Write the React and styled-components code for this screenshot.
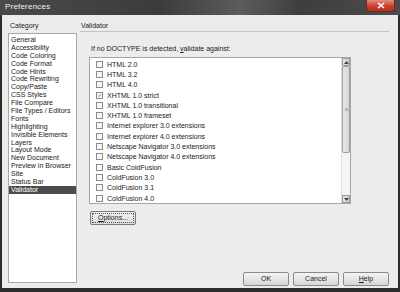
import React, { useState } from 'react';
import styled, { createGlobalStyle } from 'styled-components';

const categories = [
  'General', 'Accessibility', 'Code Coloring', 'Code Format', 'Code Hints',
  'Code Rewriting', 'Copy/Paste', 'CSS Styles', 'File Compare', 'File Types / Editors',
  'Fonts', 'Highlighting', 'Invisible Elements', 'Layers', 'Layout Mode',
  'New Document', 'Preview in Browser', 'Site', 'Status Bar', 'Validator'
];

const doctypes = [
  { name: 'HTML 2.0', on: false },
  { name: 'HTML 3.2', on: false },
  { name: 'HTML 4.0', on: false },
  { name: 'XHTML 1.0 strict', on: true },
  { name: 'XHTML 1.0 transitional', on: false },
  { name: 'XHTML 1.0 frameset', on: false },
  { name: 'Internet explorer 3.0 extensions', on: false },
  { name: 'Internet explorer 4.0 extensions', on: false },
  { name: 'Netscape Navigator 3.0 extensions', on: false },
  { name: 'Netscape Navigator 4.0 extensions', on: false },
  { name: 'Basic ColdFusion', on: false },
  { name: 'ColdFusion 3.0', on: false },
  { name: 'ColdFusion 3.1', on: false },
  { name: 'ColdFusion 4.0', on: false }
];

const GlobalStyle = createGlobalStyle`
  body {
    margin: 0;
    font-family: "Liberation Sans", "DejaVu Sans", sans-serif;
    background: #2e2e2e;
  }
`;

export default function App() {
  const [selected, setSelected] = useState('Validator');
  const [checks, setChecks] = useState(doctypes.map(d => d.on));

  const toggle = (i) => {
    const next = [...checks];
    next[i] = !next[i];
    setChecks(next);
  };

  return (
    <>
      <GlobalStyle />
      <Window>
        <TitleBar>
          <Title>Preferences</Title>
          <CloseBtn>
            <svg width="8" height="7" viewBox="0 0 8 7">
              <path d="M1 1 L7 6 M7 1 L1 6" stroke="#fff" strokeWidth="1.6" />
            </svg>
          </CloseBtn>
        </TitleBar>

        <Body>
          <LeftCol>
            <Label>Category</Label>
            <CatList>
              {categories.map(c => (
                <CatItem key={c} active={c === selected} onClick={() => setSelected(c)}>
                  {c}
                </CatItem>
              ))}
            </CatList>
          </LeftCol>

          <RightCol>
            <Header>Validator</Header>
            <Rule />
            <Prompt>
              If no DOCTYPE is detected, <u>v</u>alidate against:
            </Prompt>
            <ListBox>
              <Rows>
                {doctypes.map((d, i) => (
                  <Row key={d.name} onClick={() => toggle(i)}>
                    <Box>{checks[i] && (
                      <svg width="7" height="7" viewBox="0 0 7 7">
                        <path d="M1.5 3.5 L3 5 L5.8 1.8" stroke="#555" strokeWidth="0.9" fill="none" />
                      </svg>
                    )}</Box>
                    {d.name}
                  </Row>
                ))}
                <PartialBox />
              </Rows>
              <ScrollBar>
                <ArrowBtn>
                  <svg width="5" height="3" viewBox="0 0 5 3"><path d="M0 3 L2.5 0 L5 3Z" fill="#444" /></svg>
                </ArrowBtn>
                <Thumb><Grip /></Thumb>
                <Track />
                <ArrowBtn>
                  <svg width="5" height="3" viewBox="0 0 5 3"><path d="M0 0 L2.5 3 L5 0Z" fill="#444" /></svg>
                </ArrowBtn>
              </ScrollBar>
            </ListBox>
            <OptionsBtn><FocusRing><u>O</u>ptions...</FocusRing></OptionsBtn>

            <Footer>
              <Button>OK</Button>
              <Button>Cancel</Button>
              <Button><u>H</u>elp</Button>
            </Footer>
          </RightCol>
        </Body>
      </Window>
    </>
  );
}

const Window = styled.div`
  width: 400px;
  height: 292px;
  box-sizing: border-box;
  display: flex;
  flex-direction: column;
  background: #2e2e2e;
  padding: 0 2px 4px 2px;
`;

const TitleBar = styled.div`
  height: 15px;
  display: flex;
  align-items: flex-start;
  justify-content: space-between;
  background: linear-gradient(100deg, #4a4a4a 0%, #3c3c3c 40%, #5c5c5c 60%, #3e3e3e 75%, #4c4c4c 100%);
  margin: 0 -2px;
  padding: 0 5px 0 5px;
`;

const Title = styled.span`
  color: #f2f2f2;
  font-size: 8px;
  line-height: 14px;
  letter-spacing: 0.2px;
`;

const CloseBtn = styled.div`
  width: 27px;
  height: 11px;
  display: flex;
  align-items: center;
  justify-content: center;
  background: linear-gradient(#e58b7d, #c8402c 55%, #b5321f);
  border: 1px solid #6e2a22;
  border-top: none;
  border-radius: 0 0 3px 3px;
`;

const Body = styled.div`
  flex: 1;
  display: flex;
  background: #ececec;
  padding: 7px 9px 2px 6px;
  gap: 3px;
`;

const LeftCol = styled.div`
  width: 69px;
  display: flex;
  flex-direction: column;
`;

const Label = styled.div`
  font-size: 7px;
  color: #222;
  line-height: 8px;
  padding: 0 0 3px 2px;
`;

const CatList = styled.div`
  flex: 1;
  background: #fff;
  border: 1px solid #a8a8a8;
  padding-top: 2px;
  margin-bottom: 3px;
`;

const CatItem = styled.div`
  font-size: 7px;
  line-height: 7.9px;
  height: 7.9px;
  padding-left: 2px;
  white-space: nowrap;
  color: ${p => (p.active ? '#fff' : '#1a1a1a')};
  background: ${p => (p.active ? '#4b4b4b' : 'transparent')};
`;

const RightCol = styled.div`
  flex: 1;
  display: flex;
  flex-direction: column;
`;

const Header = styled.div`
  font-size: 7px;
  color: #222;
  line-height: 8px;
  padding-left: 1px;
`;

const Rule = styled.div`
  height: 1px;
  background: #c4c4c4;
  margin: 1px 0 0 0;
`;

const Prompt = styled.div`
  font-size: 7px;
  color: #1a1a1a;
  line-height: 8px;
  margin: 13px 0 4px 11px;
`;

const ListBox = styled.div`
  width: 262px;
  height: 147px;
  box-sizing: border-box;
  margin-left: 9px;
  background: #fff;
  border: 1px solid #a6a6a6;
  display: flex;
  overflow: hidden;
`;

const Rows = styled.div`
  flex: 1;
  padding: 1px 0 0 6px;
  overflow: hidden;
`;

const Row = styled.div`
  height: 10.3px;
  display: flex;
  align-items: center;
  gap: 4px;
  font-size: 7px;
  color: #1a1a1a;
  white-space: nowrap;
`;

const Box = styled.span`
  width: 7px;
  height: 7px;
  box-sizing: border-box;
  border: 1px solid #8a8a8a;
  background: #f7f7f7;
  display: flex;
  align-items: center;
  justify-content: center;
  flex-shrink: 0;
`;

const PartialBox = styled.div`
  width: 7px;
  height: 7px;
  box-sizing: border-box;
  border: 1px solid #8a8a8a;
  margin-top: 1.5px;
`;

const ScrollBar = styled.div`
  width: 8px;
  display: flex;
  flex-direction: column;
  background: #f0f0f0;
  border-left: 1px solid #e0e0e0;
`;

const ArrowBtn = styled.div`
  height: 8px;
  display: flex;
  align-items: center;
  justify-content: center;
  background: linear-gradient(90deg, #e6e6e6, #cfcfcf);
  border: 1px solid #9a9a9a;
  box-sizing: border-box;
`;

const Thumb = styled.div`
  height: 87px;
  box-sizing: border-box;
  border: 1px solid #a0a0a0;
  border-radius: 2px;
  background: linear-gradient(90deg, #e9e9e9, #d4d4d4);
  display: flex;
  align-items: center;
  justify-content: center;
`;

const Grip = styled.div`
  width: 3px;
  height: 3px;
  background: #b5b5b5;
`;

const Track = styled.div`
  flex: 1;
  background: #f4f4f4;
`;

const OptionsBtn = styled.div`
  width: 46px;
  height: 14px;
  box-sizing: border-box;
  margin: 7px 0 0 10px;
  border: 1px solid #6f7b86;
  border-radius: 2px;
  background: linear-gradient(#f2f2f2, #dcdcdc);
  padding: 1px;
  display: flex;
`;

const FocusRing = styled.div`
  flex: 1;
  border: 1px dotted #555;
  font-size: 7px;
  line-height: 8px;
  color: #1a1a1a;
  text-align: center;
`;

const Footer = styled.div`
  margin-top: auto;
  display: flex;
  justify-content: flex-end;
  gap: 4px;
  padding-bottom: 0px;
`;

const Button = styled.div`
  width: 46px;
  height: 14px;
  box-sizing: border-box;
  border: 1px solid #8a8a8a;
  border-radius: 2px;
  background: linear-gradient(#f4f4f4 0%, #e6e6e6 50%, #d6d6d6 100%);
  font-size: 7px;
  line-height: 12px;
  color: #1a1a1a;
  text-align: center;
`;
